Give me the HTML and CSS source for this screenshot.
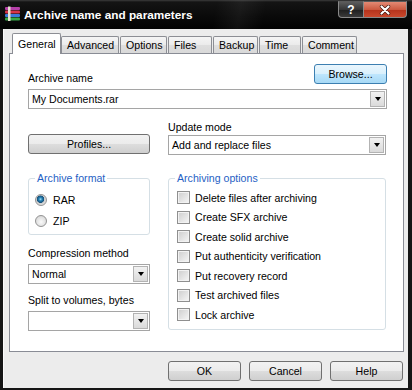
FILE: index.html
```html
<!DOCTYPE html>
<html lang="en">
<head>
    <meta charset="UTF-8">
    <title>Archive name and parameters</title>
    <link rel="stylesheet" href="styles.css">
</head>
<body>
    <div class="window">
        <div class="titlebar">
            <svg class="app-icon" width="17" height="16" viewBox="0 0 17 16">
                <rect x="1" y="1" width="15" height="3" rx="1" fill="#b53fa8"/>
                <rect x="1" y="4.5" width="15" height="3" rx="1" fill="#d8344a"/>
                <rect x="1" y="8" width="15" height="3" rx="1" fill="#3a7ad8"/>
                <rect x="1" y="11.5" width="15" height="3" rx="1" fill="#36a848"/>
                <rect x="4" y="0.5" width="2.5" height="14.5" fill="#e6e2cf"/>
            </svg>
            <span class="title">Archive name and parameters</span>
            <div class="caption">
                <span class="cap-btn cap-help">?</span>
                <span class="cap-btn cap-close">
                    <svg width="14" height="10" viewBox="0 0 14 10">
                        <path d="M3.5 1.5 L10.5 8.5 M10.5 1.5 L3.5 8.5" stroke="#3a1208" stroke-width="3.4" stroke-linecap="round"/>
                        <path d="M3.5 1.5 L10.5 8.5 M10.5 1.5 L3.5 8.5" stroke="#fff" stroke-width="2.2" stroke-linecap="round"/>
                    </svg>
                </span>
            </div>
        </div>

        <div class="client">
            <div class="tabs">
                <span class="tab active tab-general">General</span>
                <span class="tab tab-advanced">Advanced</span>
                <span class="tab tab-options">Options</span>
                <span class="tab tab-files">Files</span>
                <span class="tab tab-backup">Backup</span>
                <span class="tab tab-time">Time</span>
                <span class="tab tab-comment">Comment</span>
            </div>

            <div class="panel">
                <div class="name-row">
                    <span class="label">Archive name</span>
                    <button class="btn btn-browse">Browse...</button>
                </div>
                <div class="combo combo-name"><span class="combo-text">My Documents.rar</span><span class="drop"></span></div>

                <div class="columns">
                    <div class="col">
                        <button class="btn btn-profiles">Profiles...</button>
                        <fieldset class="group group-format">
                            <legend>Archive format</legend>
                            <div class="opt"><span class="radio checked"></span>RAR</div>
                            <div class="opt"><span class="radio"></span>ZIP</div>
                        </fieldset>
                        <div class="label label-method">Compression method</div>
                        <div class="combo combo-small"><span class="combo-text">Normal</span><span class="drop"></span></div>
                        <div class="label label-split">Split to volumes, bytes</div>
                        <div class="combo combo-small"><span class="combo-text"></span><span class="drop"></span></div>
                    </div>

                    <div class="col">
                        <div class="label label-update">Update mode</div>
                        <div class="combo combo-update"><span class="combo-text">Add and replace files</span><span class="drop"></span></div>
                        <fieldset class="group group-options">
                            <legend>Archiving options</legend>
                            <div class="opt"><span class="check"></span>Delete files after archiving</div>
                            <div class="opt"><span class="check"></span>Create SFX archive</div>
                            <div class="opt"><span class="check"></span>Create solid archive</div>
                            <div class="opt"><span class="check"></span>Put authenticity verification</div>
                            <div class="opt"><span class="check"></span>Put recovery record</div>
                            <div class="opt"><span class="check"></span>Test archived files</div>
                            <div class="opt"><span class="check"></span>Lock archive</div>
                        </fieldset>
                    </div>
                </div>
            </div>

            <div class="footer">
                <button class="btn">OK</button>
                <button class="btn">Cancel</button>
                <button class="btn">Help</button>
            </div>
        </div>
    </div>
</body>
</html>
```

FILE: styles.css
```css
body {
    margin: 0;
    font-family: "Liberation Sans", Arial, sans-serif;
    font-size: 10.6px;
    color: #000;
    background: #fff;
}

.window {
    width: 412px;
    height: 390px;
    display: flex;
    flex-direction: column;
    background: #151515;
}

/* title bar */

.titlebar {
    height: 29px;
    flex-shrink: 0;
    display: flex;
    align-items: flex-start;
    color: #fff;
    background:
        linear-gradient(100deg, transparent 52%, rgba(255, 255, 255, 0.05) 58%, transparent 64%),
        linear-gradient(#3c3c3c 0, #141414 2px, #0b0b0b 50%, #020202 100%);
}

.app-icon {
    margin: 6px 3px 0 4px;
}

.title {
    margin-top: 8px;
    font-size: 11.8px;
    font-weight: bold;
    line-height: 14px;
}

.caption {
    display: flex;
    margin: 1px 5px 0 auto;
}

.cap-btn {
    box-sizing: border-box;
    height: 17px;
    display: flex;
    align-items: center;
    justify-content: center;
    border: 1px solid #8a8a8a;
    border-top-color: #5a5a5a;
}

.cap-help {
    width: 26px;
    border-radius: 0 0 0 4px;
    font-size: 12px;
    font-weight: bold;
    background: linear-gradient(#5c5c5c, #363636 50%, #1e1e1e 51%, #3a3a3a);
}

.cap-close {
    width: 43px;
    border-left: none;
    border-radius: 0 0 4px 0;
    background: linear-gradient(#e38a74, #cc5a41 50%, #b3321b 51%, #c9482d);
}

/* client area */

.client {
    flex: 1;
    margin: 0 4px 2px 3px;
    padding-top: 4px;
    background: #ececec;
    box-shadow: inset 1px 0 #fafafa;
}

.tabs {
    display: flex;
    align-items: flex-end;
    height: 21px;
    padding-left: 9px;
    margin-bottom: -1px;
    position: relative;
    z-index: 1;
}

.tab {
    box-sizing: border-box;
    height: 17px;
    margin-bottom: 1px;
    padding: 1px 0 0 5px;
    line-height: 14px;
    border: 1px solid #8c8e94;
    border-bottom: none;
    border-radius: 2px 2px 0 0;
    background: linear-gradient(#f5f5f5, #ebebeb 50%, #dedede 51%, #d9d9d9);
}

.tab + .tab {
    margin-left: 1px;
}

.tab.active {
    height: 21px;
    margin-bottom: 0;
    padding-top: 3px;
    background: #fff;
}

.tab.active + .tab {
    margin-left: 0;
}

.tab-general { width: 49px; }
.tab-advanced { width: 58px; }
.tab-options { width: 47px; }
.tab-files { width: 44px; }
.tab-backup { width: 45px; }
.tab-time { width: 42px; }
.tab-comment { width: 55px; }

.panel {
    box-sizing: border-box;
    width: 395px;
    height: 299px;
    margin-left: 6px;
    padding: 0 16px 0 18px;
    border: 1px solid #898c95;
    background: #fff;
}

.label {
    line-height: 13px;
}

.name-row {
    display: flex;
    justify-content: space-between;
    margin-top: 10px;
}

.name-row .label {
    padding-top: 8px;
}

/* buttons */

.btn {
    box-sizing: border-box;
    height: 20px;
    padding: 0;
    font: inherit;
    color: #000;
    border: 1px solid #707070;
    border-radius: 3px;
    background: linear-gradient(#f2f2f2, #ebebeb 50%, #dddddd 51%, #cfcfcf);
}

.btn-browse {
    width: 73px;
    border-color: #3c7fb1;
    background: linear-gradient(#eaf6fd, #d9f0fc 50%, #bee6fd 51%, #a7d9f5);
}

.btn-profiles {
    margin-top: 25px;
}

/* combo boxes */

.combo {
    box-sizing: border-box;
    height: 20px;
    display: flex;
    align-items: center;
    padding: 0 1px 0 3px;
    border: 1px solid #a5a5a5;
    background: #fff;
}

.combo-text {
    flex: 1;
}

.drop {
    box-sizing: border-box;
    width: 15px;
    height: 16px;
    display: flex;
    align-items: center;
    justify-content: center;
    border: 1px solid #b3b3b3;
    background: linear-gradient(#f2f2f2, #dadada);
}

.drop::before {
    content: "";
    border-left: 3.5px solid transparent;
    border-right: 3.5px solid transparent;
    border-top: 4px solid #000;
}

.combo-name {
    margin-top: 4px;
}

.combo-small {
    margin-top: 4px;
}

.combo-update {
    margin-top: 1px;
}

/* columns */

.columns {
    display: grid;
    grid-template-columns: 122px 218px;
    column-gap: 18px;
}

.col {
    display: flex;
    flex-direction: column;
}

.label-update {
    margin-top: 12px;
}

.label-method {
    margin-top: 12px;
}

.label-split {
    margin-top: 10px;
}

/* group boxes */

.group {
    min-width: 0;
    margin: 0;
    padding: 0 0 0 6px;
    border: 1px solid #d5dfe5;
    border-radius: 3px;
}

.group legend {
    padding: 0 2px;
    line-height: 13px;
    color: #1f5fc4;
}

.opt {
    display: flex;
    align-items: center;
}

.group-format {
    margin-top: 18px;
    padding-top: 4px;
    padding-bottom: 3px;
}

.group-format .opt {
    height: 21px;
}

.group-options {
    margin-top: 17px;
    padding-top: 3px;
    padding-bottom: 4px;
}

.group-options .opt {
    height: 19.5px;
    margin-left: 2px;
}

.radio {
    box-sizing: border-box;
    width: 12px;
    height: 12px;
    margin-right: 6px;
    border: 1px solid #939393;
    border-radius: 50%;
    background: radial-gradient(circle at 50% 60%, #fafafa 0, #dedede 65%, #c4c4c4 100%);
}

.radio.checked {
    background: radial-gradient(circle at 45% 42%, #a8e4f8 0, #2c88bb 1.5px, #14507a 3.4px, #cfcfcf 4px, #eeeeee 100%);
}

.check {
    box-sizing: border-box;
    width: 13px;
    height: 13px;
    margin-right: 5px;
    border: 1px solid #8f8f8f;
    background: linear-gradient(135deg, #cdcdcd, #f6f6f6);
    box-shadow: inset 0 0 0 1px #f2f2f2;
}

/* footer */

.footer {
    display: flex;
    justify-content: flex-end;
    gap: 8px;
    margin-top: 9px;
    padding-right: 5px;
}

.footer .btn {
    width: 73px;
}
```
